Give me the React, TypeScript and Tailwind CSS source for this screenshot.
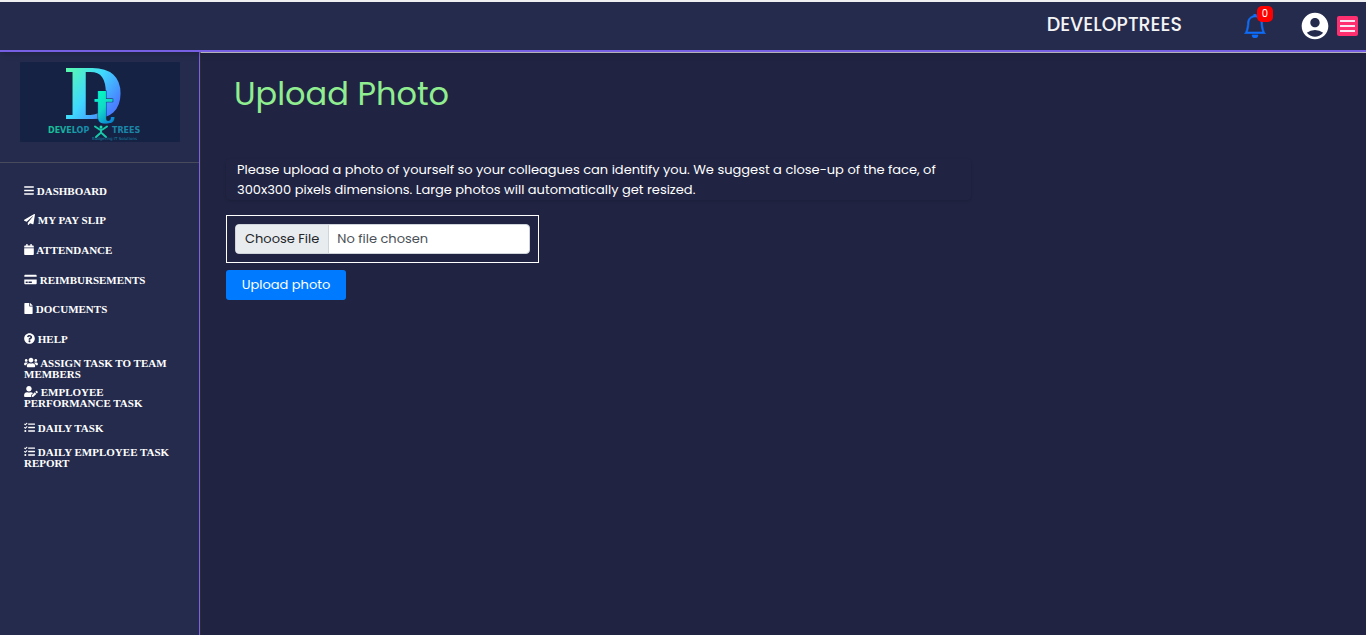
import type { ComponentType } from 'react';
import {
  FaBars,
  FaCalendar,
  FaCreditCard,
  FaFile,
  FaPaperPlane,
  FaQuestionCircle,
  FaTasks,
  FaUserEdit,
  FaUsers,
} from 'react-icons/fa';
import { BsBell } from 'react-icons/bs';
import { MdAccountCircle } from 'react-icons/md';

type NavItem = { label: string; icon: ComponentType<{ className?: string }>; width: string };

const navItems: NavItem[] = [
  { label: 'DASHBOARD', icon: FaBars, width: 'w-[10px]' },
  { label: 'MY PAY SLIP', icon: FaPaperPlane, width: 'w-[11px]' },
  { label: 'ATTENDANCE', icon: FaCalendar, width: 'w-[10px]' },
  { label: 'REIMBURSEMENTS', icon: FaCreditCard, width: 'w-[13px]' },
  { label: 'DOCUMENTS', icon: FaFile, width: 'w-[9px]' },
  { label: 'HELP', icon: FaQuestionCircle, width: 'w-[11px]' },
  { label: 'ASSIGN TASK TO TEAM MEMBERS', icon: FaUsers, width: 'w-[14px]' },
  { label: 'EMPLOYEE PERFORMANCE TASK', icon: FaUserEdit, width: 'w-[14px]' },
  { label: 'DAILY TASK', icon: FaTasks, width: 'w-[11px]' },
  { label: 'DAILY EMPLOYEE TASK REPORT', icon: FaTasks, width: 'w-[11px]' },
];

function Logo() {
  return (
    <svg viewBox="0 0 160 80" className="block w-full rounded-[1px] bg-[#162244]" role="img" aria-label="DevelopTrees">
      <defs>
        <linearGradient id="markFill" x1="0" y1="0" x2="1" y2="1">
          <stop offset="0.1" stopColor="#5affa5" />
          <stop offset="0.45" stopColor="#3fd8ff" />
          <stop offset="0.75" stopColor="#4a80ff" />
        </linearGradient>
        <linearGradient id="stemFill" x1="0" y1="0" x2="0.4" y2="1">
          <stop offset="0.2" stopColor="#00ffc0" />
          <stop offset="0.6" stopColor="#12d8c8" />
          <stop offset="1" stopColor="#0878d8" />
        </linearGradient>
        <linearGradient id="wordFill" x1="0" y1="0" x2="1" y2="0">
          <stop offset="0" stopColor="#18c896" />
          <stop offset="1" stopColor="#1786ae" />
        </linearGradient>
      </defs>
      <text x="73" y="57" textAnchor="middle" fontSize="70" fontWeight="700" fill="url(#markFill)" className="font-['DejaVu_Serif',serif]">D</text>
      <text x="84" y="61" textAnchor="middle" fontSize="46" fontWeight="700" fill="url(#stemFill)" stroke="#162244" strokeWidth="1" paintOrder="stroke" className="font-['DejaVu_Serif',serif]">t</text>
      <g fontSize="8" fontWeight="700" className="font-['DejaVu_Sans',sans-serif]">
        <text x="28" y="71" fill="url(#wordFill)">DEVELOP</text>
        <text x="92" y="71" fill="#1b86a8">TREES</text>
      </g>
      <g fill="none" stroke="#18c8a8" strokeWidth="2" strokeLinecap="round" strokeLinejoin="round">
        <circle cx="81" cy="65" r="1.500" fill="#18e0b0" stroke="none" />
        <path d="M75 64.500l4.500 3h3l4.500-3M81 68v2.500M76 75l5-4.500 5 4.500" />
      </g>
      <text x="72" y="78" fontSize="4" fill="#1580a0" className="font-['DejaVu_Sans',sans-serif]">Budgeting IT Solutions</text>
    </svg>
  );
}

export default function App() {
  return (
    <div className="flex min-h-screen flex-col bg-[#202442] font-['Poppins','Inter',sans-serif] text-white">
      <header className="z-10 flex h-[52px] items-center justify-end border-t-2 border-b-2 border-t-[#eef0f2] border-b-[#7860e4] bg-[#252b4d] pr-2 shadow-md">
        <span className="mr-[61px] pb-0.5 text-[19px] leading-6 font-medium text-[#f4f4f6]">DEVELOPTREES</span>
        <button type="button" aria-label="Notifications" className="relative mr-9 text-[#0d6efd]">
          <BsBell className="size-6 stroke-[0.4]" />
          <span className="absolute -top-2 left-3.5 flex h-4 w-4 items-center justify-center rounded-[5px] bg-[#ff0000] text-[10px] leading-4 text-white">0</span>
        </button>
        <button type="button" aria-label="Account" className="mr-1.5 -ml-1">
          <MdAccountCircle className="size-8" />
        </button>
        <button type="button" aria-label="Toggle menu" className="flex h-5 w-[21px] flex-col justify-center gap-[3px] rounded-[2px] bg-[#ff2f70] px-[3px]">
          <span className="h-0.5 bg-[#f7e8f4]" />
          <span className="h-0.5 bg-[#f7e8f4]" />
          <span className="h-0.5 bg-[#f7e8f4]" />
        </button>
      </header>
      <div className="flex flex-1">
        <aside className="w-50 shrink-0 border-r border-[#7d63df] bg-[#252b4d]">
          <a href="#home" className="block border-b border-[#484b5c] pt-2.5 pr-[19px] pb-5 pl-5">
            <Logo />
          </a>
          <nav aria-label="Main" className="pt-[13px] pr-5 pl-6">
            <ul className="grid h-74 auto-rows-fr items-center font-['Liberation_Serif',serif] text-[11px] leading-[11px] font-bold">
              {navItems.map(({ label, icon: Icon, width }) => (
                <li key={label}>
                  <a href="#menu" className="block">
                    <Icon className={`inline-block h-[11px] align-[-1px] ${width}`} /> {label}
                  </a>
                </li>
              ))}
            </ul>
          </nav>
        </aside>
        <main className="min-w-0 flex-1 border-t border-l border-t-[#c9c9d0] border-l-[#292b36] pr-6 pl-[25px]">
          <h1 className="pt-5 pl-2 text-[32px] leading-[42px] text-[#90ee90]">Upload Photo</h1>
          <p className="mt-11 max-w-[745px] rounded px-[11px] pt-px text-[13px] leading-5 shadow-sm">
            Please upload a photo of yourself so your colleagues can identify you. We suggest a close-up of the face, of 300x300 pixels dimensions. Large photos will automatically get resized.
          </p>
          <form className="mt-[15px]">
            <div className="w-[313px] max-w-full border border-white p-2">
              <input
                type="file"
                aria-label="Photo"
                className="block h-[30px] w-full rounded border border-[#ced4da] bg-white text-[13px] leading-7 text-[#495057] file:mr-2 file:h-7 file:border-0 file:border-r file:border-solid file:border-[#ced4da] file:bg-[#e9ecef] file:px-[9px] file:text-[13px] file:font-normal file:text-[#212529]"
              />
            </div>
            <button type="button" className="mt-[7px] h-[30px] w-30 rounded-[3px] bg-[#007bff] text-[13px]">
              Upload photo
            </button>
          </form>
        </main>
      </div>
    </div>
  );
}
